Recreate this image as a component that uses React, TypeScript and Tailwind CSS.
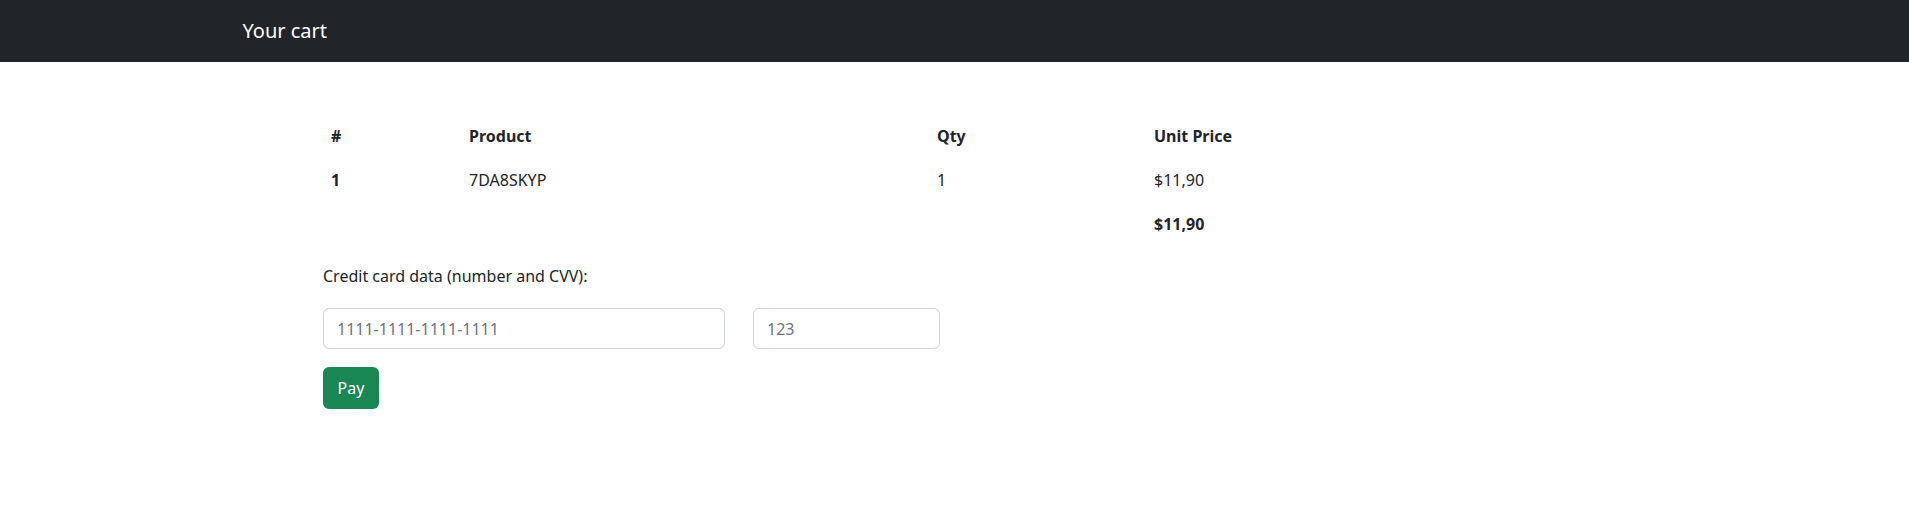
import React from "react";

export default function App() {
  const font = { fontFamily: '"Noto Sans", "Open Sans", sans-serif' };
  return (
    <div className="min-h-[525px] bg-white text-[#212529]" style={font}>
      <nav className="h-[62px] bg-[#212529]">
        <div className="mx-auto flex h-full w-[1424px] items-center">
          <span className="text-[20px] leading-[30px] text-white">Your cart</span>
        </div>
      </nav>
      <main className="mx-auto w-[1263px] pt-[52px]">
        <table className="w-full border-collapse text-[16px] leading-6">
          <thead>
            <tr className="h-[44px]">
              <th className="w-[138px] px-2 text-left font-bold">#</th>
              <th className="w-[468px] px-2 text-left font-bold">Product</th>
              <th className="w-[217px] px-2 text-left font-bold">Qty</th>
              <th className="px-2 text-left font-bold">Unit Price</th>
            </tr>
          </thead>
          <tbody>
            <tr className="h-[44px]">
              <td className="px-2 font-bold">1</td>
              <td className="px-2">7DA8SKYP</td>
              <td className="px-2">1</td>
              <td className="px-2">$11,90</td>
            </tr>
            <tr className="h-[44px]">
              <td className="px-2"></td>
              <td className="px-2"></td>
              <td className="px-2"></td>
              <td className="px-2 font-bold">$11,90</td>
            </tr>
          </tbody>
        </table>
        <div className="mt-[18px] text-[16px] leading-6">Credit card data (number and CVV):</div>
        <div className="mt-[20px] flex gap-[28px]">
          <input
            className="h-[41px] w-[402px] rounded-[6px] border border-[#ced4da] px-[13px] text-[16px] text-[#212529] placeholder:text-[#6c757d] outline-none"
            placeholder="1111-1111-1111-1111"
            style={font}
          />
          <input
            className="h-[41px] w-[187px] rounded-[6px] border border-[#ced4da] px-[13px] text-[16px] text-[#212529] placeholder:text-[#6c757d] outline-none"
            placeholder="123"
            style={font}
          />
        </div>
        <button
          className="mt-[18px] h-[42px] w-[56px] rounded-[6px] bg-[#198754] text-[16px] text-white"
          style={font}
        >
          Pay
        </button>
      </main>
    </div>
  );
}
